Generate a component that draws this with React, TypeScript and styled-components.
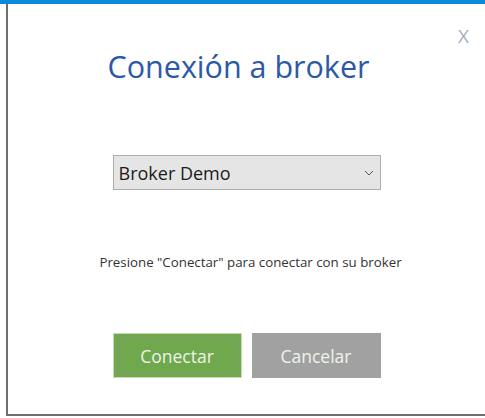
import React from 'react';
import styled, { createGlobalStyle } from 'styled-components';

const GlobalStyle = createGlobalStyle`
  html, body {
    margin: 0;
    padding: 0;
    background: #ffffff;
  }

  body {
    width: 485px;
    height: 418px;
    overflow: hidden;
    font-family: 'Open Sans', 'Noto Sans', Arial, sans-serif;
  }
`;

const StyledWindow = styled.div`
  width: 485px;
  height: 418px;
  border-top: 4px solid #0b8ad9;
  box-sizing: border-box;
`;

const StyledDialog = styled.div`
  position: relative;
  margin-left: 6px;
  height: 410px;
  border-left: 2px solid #6f6f6f;
  border-bottom: 2px solid #6f6f6f;
  display: flex;
  flex-direction: column;
  align-items: center;
`;

const StyledClose = styled.button`
  position: absolute;
  top: 19px;
  right: 16px;
  border: none;
  background: none;
  padding: 0;
  font-family: 'Open Sans', Arial, sans-serif;
  font-size: 19px;
  font-weight: 400;
  color: #a3adc0;
  cursor: pointer;
`;

const StyledTitle = styled.h1`
  margin: 44px 16px 0 0;
  font-weight: 400;
  font-size: 30.5px;
  line-height: 36px;
  color: #2b59a6;
`;

const StyledSelect = styled.div`
  margin-top: 71px;
  width: 268px;
  height: 35px;
  box-sizing: border-box;
  border: 1px solid #adadad;
  background: #e5e5e5;
  display: flex;
  align-items: center;
  justify-content: space-between;
  padding: 0 6px 0 5px;
  font-size: 18px;
  color: #1b1b1b;
`;

const StyledHint = styled.p`
  margin: 63px 0 0 8px;
  font-size: 13.3px;
  line-height: 18px;
  color: #333333;
`;

const StyledActions = styled.div`
  margin-top: 62px;
  display: flex;
  gap: 10px;
`;

const StyledButton = styled.button<{ $variant: 'primary' | 'secondary' }>`
  width: 129px;
  height: 45px;
  box-sizing: border-box;
  border: 1px solid ${({ $variant }) => ($variant === 'primary' ? '#c6dcb6' : '#a1a1a1')};
  background: ${({ $variant }) => ($variant === 'primary' ? '#6fa84d' : '#a1a1a1')};
  color: #eef4ea;
  font-family: 'Open Sans', Arial, sans-serif;
  font-size: 17.5px;
  padding: 4px;
  cursor: pointer;

  span {
    display: flex;
    align-items: center;
    justify-content: center;
    height: 100%;
    box-sizing: border-box;
    border: ${({ $variant }) => ($variant === 'primary' ? '1px dotted #8c8c98' : 'none')};
  }
`;

const Chevron = () => (
  <svg
    width="10"
    height="6"
    viewBox="0 0 10 6"
  >
    <path
      d="M1 1 L5 5 L9 1"
      fill="none"
      stroke="#555"
      strokeWidth="1"
    />
  </svg>
);

const App: React.FunctionComponent = () => {
  return (
    <StyledWindow>
      <GlobalStyle />
      <StyledDialog>
        <StyledClose>X</StyledClose>
        <StyledTitle>Conexión a broker</StyledTitle>
        <StyledSelect>
          <span>Broker Demo</span>
          <Chevron />
        </StyledSelect>
        <StyledHint>Presione "Conectar" para conectar con su broker</StyledHint>
        <StyledActions>
          <StyledButton $variant="primary">
            <span>Conectar</span>
          </StyledButton>
          <StyledButton $variant="secondary">
            <span>Cancelar</span>
          </StyledButton>
        </StyledActions>
      </StyledDialog>
    </StyledWindow>
  );
};

export default App;
